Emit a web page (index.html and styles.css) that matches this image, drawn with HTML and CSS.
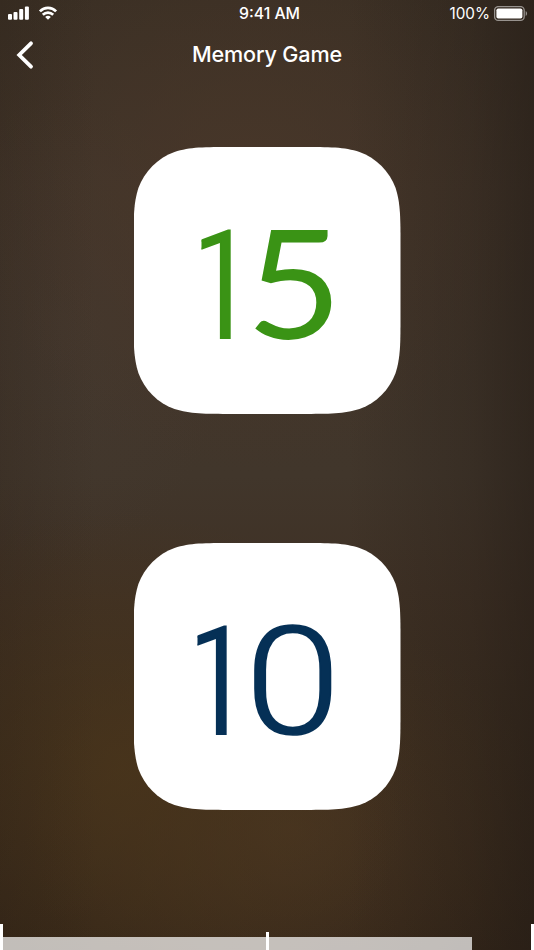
FILE: index.html
```html
<!DOCTYPE html>
<html lang="en">

<head>
    <meta charset="UTF-8">
    <title>Memory Game</title>
    <link rel="stylesheet" href="styles.css">
</head>

<body>
    <div class="screen">
        <div class="status">
            <div class="status-left">
                <svg class="signal" width="21" height="14" viewBox="0 0 21 14" fill="#fff">
                    <rect x="0" y="8" width="4" height="5.7" rx="1"/>
                    <rect x="5.5" y="6" width="4" height="7.7" rx="1"/>
                    <rect x="11.2" y="3" width="4" height="10.7" rx="1"/>
                    <rect x="16.9" y="0.5" width="4" height="13.2" rx="1"/>
                </svg>
                <svg class="wifi" width="20" height="14" viewBox="0 0 20 14" fill="none" stroke="#fff" stroke-width="2.7">
                    <path d="M1.9 5.4C6.4 .7 13.6 .7 18.1 5.4"/>
                    <path d="M4.8 8.7C7.8 5.8 12.2 5.8 15.2 8.7"/>
                    <path d="M7.2 11.1C8.8 9.4 11.2 9.4 12.8 11.1L10 13.8Z" fill="#fff" stroke="none"/>
                </svg>
            </div>
            <div class="time">9:41 AM</div>
            <div class="status-right">
                <span class="percent">100%</span>
                <svg class="battery" width="34" height="16" viewBox="0 0 34 16">
                    <rect x=".6" y=".6" width="29.6" height="13.8" rx="3.6" fill="none" stroke="#fff" stroke-opacity=".5" stroke-width="1.3"/>
                    <rect x="2.4" y="2.4" width="26" height="10.2" rx="1.8" fill="#fff"/>
                    <path d="M31.7 5C33.5 5.8 33.5 9.2 31.7 10Z" fill="#fff" fill-opacity=".5"/>
                </svg>
            </div>
        </div>
        <div class="nav">
            <a class="back" href="#">
                <svg width="18" height="30" viewBox="0 0 18 30">
                    <path d="M15 3.3L3.2 15L15 26.7" fill="none" stroke="#fff" stroke-width="3.8" stroke-linecap="round"/>
                </svg>
            </a>
            <h1>Memory Game</h1>
        </div>
        <div class="board">
            <div class="tile green"><span class="one">1</span><span class="five">5</span></div>
            <div class="tile blue"><span class="one">1</span><span class="zero">0</span></div>
        </div>
        <div class="timer">
            <div class="bar" style="width: 469px"></div>
            <div class="tick"></div>
        </div>
    </div>
</body>

</html>
```
FILE: styles.css
```css
html,
body {
    width: 100%;
    height: 100%;
    margin: 0;
    padding: 0;
}

body {
    font-family: Inter, "Liberation Sans", sans-serif;
    color: #fff;
    overflow: hidden;
}

svg {
    display: block;
}

.screen {
    width: 534px;
    height: 950px;
    display: flex;
    flex-direction: column;
    background:
        linear-gradient(90deg, rgba(40, 29, 20, .22), rgba(40, 29, 20, 0) 18%, rgba(36, 28, 22, 0) 65%, rgba(36, 28, 22, .3) 88%, rgba(36, 28, 22, .6)),
        radial-gradient(ellipse 300px 260px at 120px 770px, rgba(74, 53, 26, .75), rgba(74, 53, 26, 0)),
        radial-gradient(ellipse 290px 280px at 250px 190px, rgba(74, 55, 41, .8), rgba(74, 55, 41, 0)),
        radial-gradient(ellipse 170px 230px at 60px 330px, rgba(72, 60, 52, .4), rgba(72, 60, 52, 0)),
        radial-gradient(ellipse 260px 220px at 290px 830px, rgba(77, 56, 35, .7), rgba(77, 56, 35, 0)),
        linear-gradient(180deg, #3a2f24 0%, #403429 20%, #41362b 50%, #3f3125 62%, #3a2c1e 80%, #332518 100%);
}

.status {
    height: 28px;
    display: flex;
    justify-content: space-between;
    font-size: 15.3px;
    line-height: 28px;
}

.status-left,
.status-right {
    width: 120px;
    display: flex;
}

.status-left {
    padding: 6px 0 0 8px;
    box-sizing: border-box;
}

.wifi {
    margin-left: 9px;
}

.time {
    font-size: 15.8px;
    font-weight: 500;
    padding-left: 5px;
}

.status-right {
    justify-content: flex-end;
    padding-right: 6px;
    box-sizing: border-box;
}

.battery {
    margin: 6px 0 0 4px;
}

.nav {
    height: 54px;
    display: flex;
    align-items: center;
}

.back {
    width: 50px;
    padding-left: 16px;
    box-sizing: border-box;
}

.nav h1 {
    flex: 1;
    margin: 0 50px 1px 0;
    font-size: 21.6px;
    font-weight: 500;
    line-height: 53px;
    letter-spacing: -.15px;
    text-align: center;
}

.board {
    flex: 1;
    padding-top: 65px;
    display: flex;
    flex-direction: column;
    align-items: center;
    gap: 129px;
}

/* squircle tiles */
.tile {
    width: 267px;
    height: 267px;
    padding-left: 45px;
    box-sizing: border-box;
    display: flex;
    background: #fff;
    clip-path: path("M99.4 0H167.6C196.2 0 210.6 0 226 4.9C242.8 11 256 24.2 262.1 41C267 56.4 267 70.8 267 99.4V167.6C267 196.2 267 210.6 262.1 226C256 242.8 242.8 256 226 262.1C210.6 267 196.2 267 167.6 267H99.4C70.8 267 56.4 267 41 262.1C24.2 256 11 242.8 4.9 226C0 210.6 0 196.2 0 167.6V99.4C0 70.8 0 56.4 4.9 41C11 24.2 24.2 11 41 4.9C56.4 0 70.8 0 99.4 0Z");
    font-family: Roboto, "Liberation Sans", sans-serif;
    font-size: 151px;
    font-weight: 300;
    line-height: 279px;
}

.tile span {
    transform-origin: 0 50%;
    -webkit-text-stroke: 1.6px currentColor;
}

/* shorter flag on the digit */
.tile .one {
    width: 67px;
    letter-spacing: -22px;
    clip-path: inset(0 0 0 23px);
    -webkit-text-stroke-width: 2px;
}

.tile .five {
    font-family: Lato, "Liberation Sans", sans-serif;
    font-weight: 400;
    line-height: 267px;
    transform: scaleX(1.1);
    -webkit-text-stroke-width: 0;
}

.zero {
    transform: scaleX(1.14);
}

.green {
    color: #3a9315;
}

.blue {
    padding-left: 41px;
    color: #053056;
}

.tile.blue .one {
    width: 70px;
}

.timer {
    height: 26px;
    display: flex;
    align-items: flex-end;
    border: solid #fff;
    border-width: 0 3px;
    box-sizing: border-box;
    position: relative;
}

.bar {
    height: 13.5px;
    background: rgba(255, 255, 255, .7);
}

.tick {
    position: absolute;
    left: 262.5px;
    top: 8px;
    width: 3px;
    height: 18px;
    background: #fff;
}
```
